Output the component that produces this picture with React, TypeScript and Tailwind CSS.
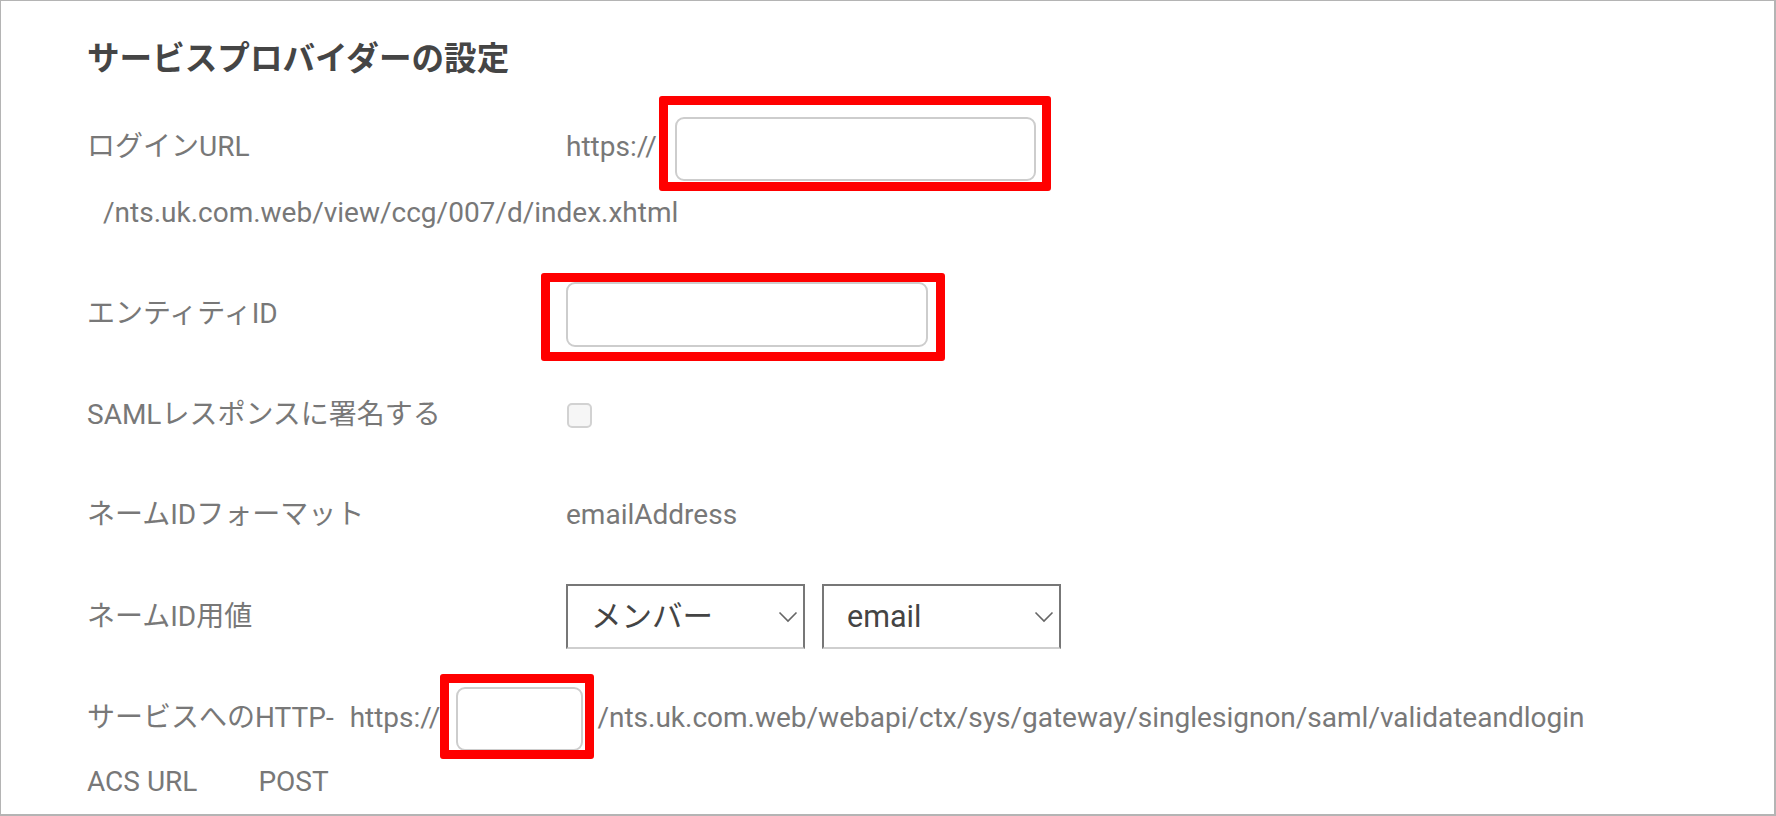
const RedMark = ({ className }: { className: string }) => (
    <span className={`pointer-events-none absolute rounded-[3px] border-[9px] border-[#ff0000] ${className}`} />
);

const Chevron = () => (
    <svg width="20" height="12" viewBox="0 0 20 12" fill="none" className="mr-[5px]">
        <polyline points="1.5,1.5 10,10 18.5,1.5" stroke="#666" strokeWidth="1.6" />
    </svg>
);

const FakeSelect = ({ value }: { value: string }) => (
    <div className="flex h-[65px] w-[239px] items-center justify-between border-2 border-[#777] border-b-[#cfcfcf] pl-[23px] text-[30.5px] text-[#444]">
        <span>{value}</span>
        <Chevron />
    </div>
);

export default function App() {
    return (
        <div className="box-border h-[816px] w-[1776px] border-t border-l border-r-2 border-b-2 border-[#b4b4b4] bg-white pl-[86px] font-['Roboto','Noto_Sans_CJK_JP',sans-serif] text-[28px] text-[#787878]">
            <h1 className="mt-[38px] h-[40px] text-[32.6px] font-bold leading-[40px] text-[#454545]">
                サービスプロバイダーの設定
            </h1>

            {/* ログインURL */}
            <div className="mt-[38px] flex h-[64px] items-center">
                <span className="w-[479px] shrink-0 -translate-y-[2px]">ログインURL</span>
                <span className="-translate-y-[2px]">https://</span>
                <span className="relative ml-[18px]">
                    <input className="block h-[64px] w-[361px] rounded-[9px] border-2 border-[#cdcdcd] bg-white outline-none" />
                    <RedMark className="-left-[16px] -right-[15px] -top-[21px] -bottom-[10px]" />
                </span>
            </div>
            <div className="mt-[16px] h-[32px] pl-[16px] leading-[32px]">/nts.uk.com.web/view/ccg/007/d/index.xhtml</div>

            {/* エンティティID */}
            <div className="mt-[53px] flex h-[65px] items-center">
                <span className="w-[479px] shrink-0 -translate-y-[1px]">エンティティID</span>
                <span className="relative">
                    <input className="block h-[65px] w-[362px] rounded-[9px] border-2 border-[#cdcdcd] bg-white outline-none" />
                    <RedMark className="-left-[25px] -right-[17px] -top-[9px] -bottom-[14px]" />
                </span>
            </div>

            {/* SAML */}
            <div className="mt-[48px] flex h-[40px] items-center">
                <span className="w-[479px] shrink-0">SAMLレスポンスに署名する</span>
                <span className="ml-[1px] block h-[25px] w-[25px] rounded-[5px] border-2 border-[#d2d2d2] bg-[#f6f6f6]" />
            </div>

            <div className="mt-[60px] flex h-[40px] items-center">
                <span className="w-[479px] shrink-0">ネームIDフォーマット</span>
                <span>emailAddress</span>
            </div>

            <div className="mt-[49px] flex h-[65px] items-center">
                <span className="w-[479px] shrink-0">ネームID用値</span>
                <div className="flex gap-[17px]">
                    <FakeSelect value="メンバー" />
                    <FakeSelect value="email" />
                </div>
            </div>

            {/* ACS URL */}
            <div className="mt-[38px] flex h-[64px] items-center">
                <span className="-translate-y-[1px]">サービスへのHTTP-</span>
                <span className="ml-[16px] -translate-y-[1px]">https://</span>
                <span className="relative ml-[16px]">
                    <input className="block h-[64px] w-[127px] rounded-[9px] border-2 border-[#cdcdcd] bg-white outline-none" />
                    <RedMark className="-left-[16px] -right-[11px] -top-[13px] -bottom-[8px]" />
                </span>
                <span className="ml-[14px] -translate-y-[1px]">/nts.uk.com.web/webapi/ctx/sys/gateway/singlesignon/saml/validateandlogin</span>
            </div>
            <div className="mt-[15px] flex h-[32px] items-center">
                <span>ACS URL</span>
                <span className="ml-[61px]">POST</span>
            </div>
        </div>
    );
}
